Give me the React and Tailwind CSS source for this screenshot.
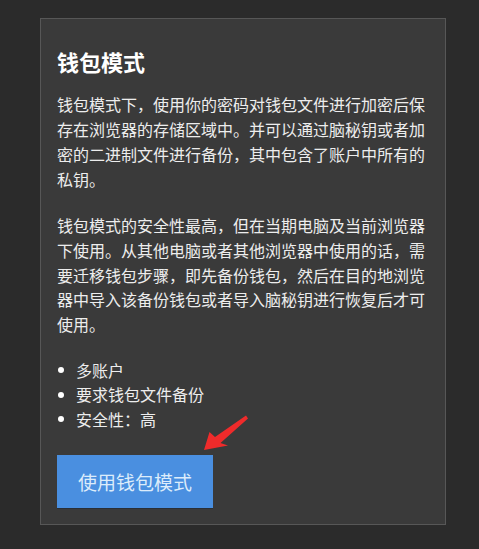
import React from "react";

export default function App() {
  return (
    <div
      className="min-h-screen w-full bg-[#2b2b2b] pt-[18px] pl-[40px]"
      style={{ fontFamily: '"Noto Sans CJK SC", "Noto Sans", sans-serif' }}
    >
      <div className="relative w-[406px] border border-[#575757] bg-[#3a3a3a] pt-[27px] pb-[16px] pl-4 pr-[18px] text-[#ededed]">
        <h2 className="text-[22px] leading-[30px] font-bold text-white">钱包模式</h2>
        <p className="mt-4 text-[16px] leading-[25px]">
          钱包模式下，使用你的密码对钱包文件进行加密后保存在浏览器的存储区域中。并可以通过脑秘钥或者加密的二进制文件进行备份，其中包含了账户中所有的私钥。
        </p>
        <p className="mt-[21px] text-[16px] leading-[24.75px]">
          钱包模式的安全性最高，但在当期电脑及当前浏览器下使用。从其他电脑或者其他浏览器中使用的话，需要迁移钱包步骤，即先备份钱包，然后在目的地浏览器中导入该备份钱包或者导入脑秘钥进行恢复后才可使用。
        </p>
        <ul className="mt-[21px] text-[16px] leading-[24.5px]">
          {["多账户", "要求钱包文件备份", "安全性：高"].map((t) => (
            <li key={t} className="flex items-center">
              <span className="flex w-[19px] shrink-0 items-center">
                <span className="ml-[1px] block h-[6px] w-[6px] rounded-full bg-white" />
              </span>
              <span>{t}</span>
            </li>
          ))}
        </ul>
        <div className="relative mt-[24px]">
          <button className="h-[53px] w-[156px] bg-[#4a8fe0] text-[19px] leading-[25px] text-[#dcecfb] shadow-[0_1px_0_#2a2f36]">
            使用钱包模式
          </button>
          <svg
            className="absolute left-[146px] top-[-40px]"
            width="50"
            height="40"
            viewBox="146 -40 50 40"
          >
            <polygon
              points="147,-5 152.5,-23 158,-18 189,-39.5 191,-36.5 163.5,-12 171,-9.5"
              fill="#ef2b2b"
            />
          </svg>
        </div>
      </div>
    </div>
  );
}
